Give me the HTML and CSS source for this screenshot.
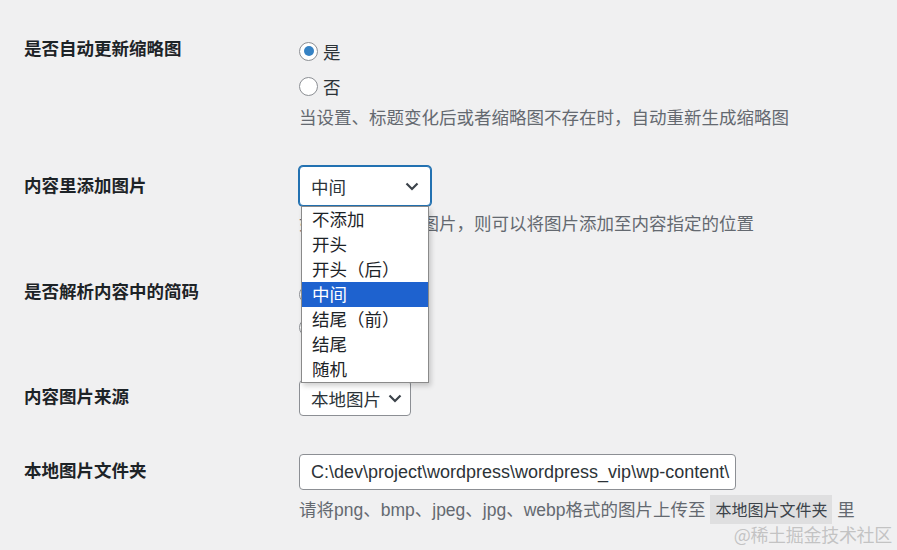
FILE: index.html
```html
<!DOCTYPE html>
<html lang="zh-CN">
<head>
<meta charset="utf-8">
<title>设置</title>
<link rel="stylesheet" href="styles.css">
</head>
<body>
<div class="form">
  <div class="row r1">
    <div class="th"><span class="label">是否自动更新缩略图</span></div>
    <div class="td">
      <label class="radio"><span class="dot checked"></span>是</label>
      <label class="radio gap3"><span class="dot"></span>否</label>
      <p class="desc d3">当设置、标题变化后或者缩略图不存在时，自动重新生成缩略图</p>
    </div>
  </div>
  <div class="row r2">
    <div class="th"><span class="label">内容里添加图片</span></div>
    <div class="td">
      <div class="select-wrap">
        <div class="select focus w132">
          <span>中间</span>
          <svg class="chev" width="14" height="9" viewBox="0 0 14 9"><polyline points="1.5,1.5 7,7 12.5,1.5" fill="none" stroke="#3c434a" stroke-width="2.2"/></svg>
        </div>
        <ul class="menu">
          <li>不添加</li>
          <li>开头</li>
          <li>开头（后）</li>
          <li class="sel">中间</li>
          <li>结尾（前）</li>
          <li>结尾</li>
          <li>随机</li>
        </ul>
      </div>
      <p class="desc d5">如果选择了添加图片，则可以将图片添加至内容指定的位置</p>
    </div>
  </div>
  <div class="row r3">
    <div class="th"><span class="label">是否解析内容中的简码</span></div>
    <div class="td">
      <label class="radio"><span class="dot checked"></span>是</label>
      <label class="radio gap1"><span class="dot"></span>否</label>
    </div>
  </div>
  <div class="row r4">
    <div class="th"><span class="label">内容图片来源</span></div>
    <div class="td">
      <div class="select w112 h36">
        <span>本地图片</span>
        <svg class="chev" width="14" height="9" viewBox="0 0 14 9"><polyline points="1.5,1.5 7,7 12.5,1.5" fill="none" stroke="#3c434a" stroke-width="2.2"/></svg>
      </div>
    </div>
  </div>
  <div class="row r5">
    <div class="th"><span class="label">本地图片文件夹</span></div>
    <div class="td">
      <div class="input">C:\dev\project\wordpress\wordpress_vip\wp-content\</div>
      <p class="desc d6">请将png、bmp、jpeg、jpg、webp格式的图片上传至 <code>本地图片文件夹</code> 里</p>
    </div>
  </div>
</div>
<div class="watermark">@稀土掘金技术社区</div>
</body>
</html>
```

FILE: styles.css
```css
html, body {
  margin: 0;
  padding: 0;
  background: #f0f0f1;
  width: 897px;
  height: 550px;
  overflow: hidden;
  font-family: "Liberation Sans", "Noto Sans CJK SC", sans-serif;
  font-size: 17.5px;
  color: #3c434a;
}
.form {
  padding-left: 24px;
}
.row {
  display: flex;
  align-items: flex-start;
}
.r1 { padding-top: 35px; }
.r2 { padding-top: 35px; }
.r3 { padding-top: 41px; }
.r4 { padding-top: 37px; }
.r5 { padding-top: 38px; }
.th {
  width: 275px;
  flex: none;
  padding-top: 4px;
}
.r1 .th, .r3 .th { padding-top: 1px; }
.r2 .th { padding-top: 7px; }
.label {
  display: block;
  font-weight: 700;
  color: #1d2327;
  line-height: 26px;
}
.td {
  display: flex;
  flex-direction: column;
  align-items: flex-start;
}
.radio {
  display: flex;
  align-items: center;
  height: 32px;
  color: #2c3338;
}
.gap3 { margin-top: 3px; }
.gap1 { margin-top: 1px; }
.dot {
  width: 19px;
  height: 19px;
  box-sizing: border-box;
  border: 1px solid #8c8f94;
  border-radius: 50%;
  background: #fff;
  margin-right: 5px;
  display: flex;
  align-items: center;
  justify-content: center;
}
.dot.checked::after {
  content: "";
  width: 10px;
  height: 10px;
  border-radius: 50%;
  background: #3582c4;
}
.desc {
  margin: 0;
  line-height: 26px;
  color: #646970;
}
.d3 { margin-top: 3px; }
.d5 { margin-top: 5px; }
.d6 { margin-top: 6px; }
.select-wrap {
  position: relative;
}
.select {
  box-sizing: border-box;
  height: 40px;
  background: #fff;
  border: 1px solid #8c8f94;
  border-radius: 4px;
  display: flex;
  align-items: center;
  justify-content: space-between;
  padding: 0 11px 0 11px;
  color: #2c3338;
}
.select.focus {
  border-color: #2271b1;
  box-shadow: 0 0 0 1px #2271b1;
}
.w132 { width: 132px; }
.w112 { width: 112px; padding-right: 8px; }
.h36 { height: 36px; }
.chev { flex: none; }
.menu {
  position: absolute;
  top: 40px;
  left: 2px;
  width: 128px;
  box-sizing: border-box;
  margin: 0;
  padding: 0;
  list-style: none;
  background: #fff;
  border: 1px solid #8a8a8a;
  box-shadow: 2px 3px 5px rgba(0, 0, 0, 0.18);
  z-index: 5;
}
.menu li {
  height: 25px;
  line-height: 27px;
  padding-left: 10px;
  color: #1d2327;
}
.menu li.sel {
  background: #1e62cf;
  color: #fff;
}
.input {
  box-sizing: border-box;
  width: 437px;
  height: 36px;
  background: #fff;
  border: 1px solid #8c8f94;
  border-radius: 4px;
  padding: 0 11px;
  line-height: 34px;
  font-size: 18px;
  white-space: nowrap;
  overflow: hidden;
  color: #2c3338;
}
code {
  font-family: "Noto Sans CJK SC", sans-serif;
  font-size: 16px;
  background: rgba(0, 0, 0, 0.07);
  padding: 2px 5px 3px;
  color: #3c434a;
}
.watermark {
  position: absolute;
  right: 5px;
  bottom: 3px;
  font-family: "Noto Sans CJK SC", sans-serif;
  font-size: 18px;
  color: rgba(150, 150, 150, 0.5);
  letter-spacing: -0.3px;
}
```
